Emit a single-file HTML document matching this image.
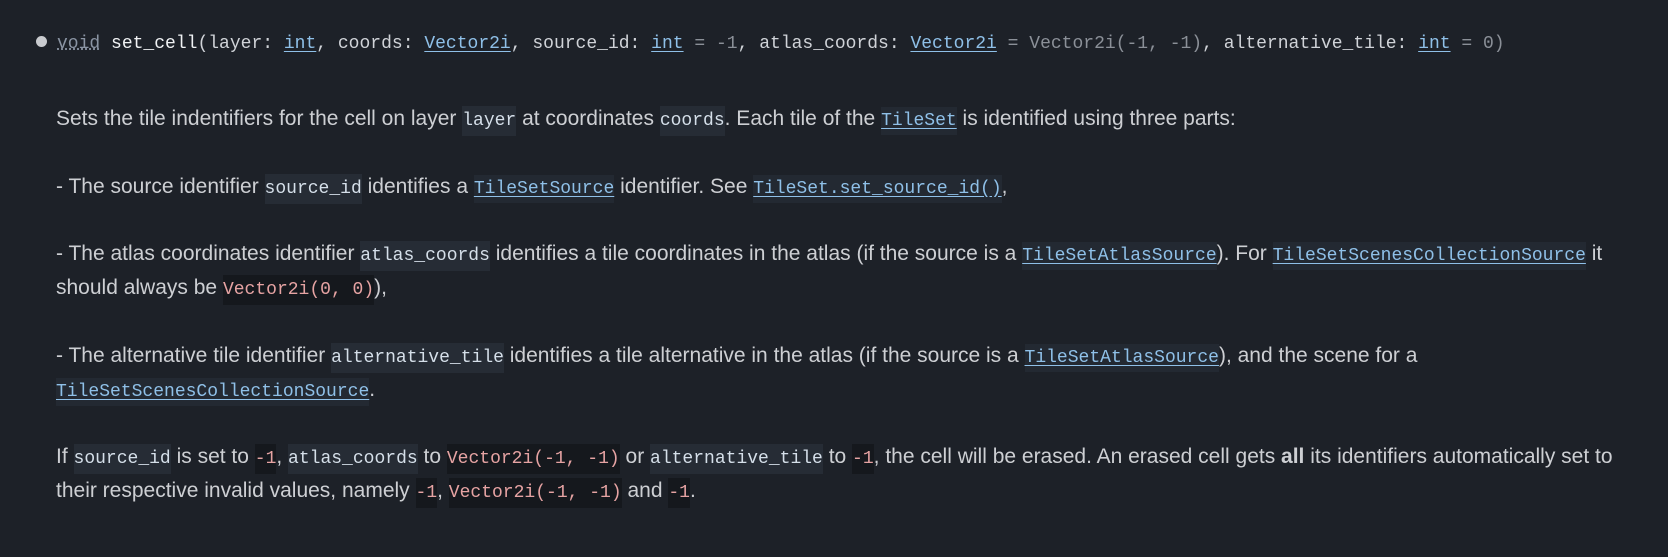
<!DOCTYPE html>
<html><head><meta charset="utf-8"><style>
html,body{margin:0;padding:0;background:#1d2128;width:1668px;height:557px;overflow:hidden}
body{font-family:"Liberation Sans",sans-serif;color:#cdcfd3;font-size:21px}
.sig{position:absolute;left:36px;top:34px;font-family:"Liberation Mono",monospace;font-size:18px;color:#d0d3d8;white-space:nowrap}
.dot{display:inline-block;width:11px;height:11px;border-radius:50%;background:#c9cbcf;margin-right:10px;vertical-align:1px}
.kw{color:#8a94a3;text-decoration:underline dotted #8a94a3}
.fn{color:#f0f2f4}
.ty{color:#8fc0e8;text-decoration:underline;text-underline-offset:3px}
.dim{color:#8b9098}
.desc{position:absolute;left:56px;top:102px;width:1580px;line-height:34px}
p{margin:0 0 33.5px 0}
code,a{line-height:1}
code{font-family:"Liberation Mono",monospace;font-size:18px;background:#262c35;color:#d5dfe9;padding:5px 0}
code.r{background:#15181d;color:#e6a3a3}
a{color:#8fc0e8;font-family:"Liberation Mono",monospace;font-size:18px;text-decoration:underline;text-underline-offset:3px;background:#232932;padding:4px 0}
</style></head><body>
<div class="sig"><span class="dot"></span><span class="kw">void</span> <span class="fn">set_cell</span>(layer: <span class="ty">int</span>, coords: <span class="ty">Vector2i</span>, source_id: <span class="ty">int</span> <span class="dim">= -1</span>, atlas_coords: <span class="ty">Vector2i</span> <span class="dim">= Vector2i(-1, -1)</span>, alternative_tile: <span class="ty">int</span> <span class="dim">= 0)</span></div>
<div class="desc">
<p>Sets the tile indentifiers for the cell on layer <code>layer</code> at coordinates <code>coords</code>. Each tile of the <a>TileSet</a> is identified using three parts:</p>
<p>- The source identifier <code>source_id</code> identifies a <a>TileSetSource</a> identifier. See <a>TileSet.set_source_id()</a>,</p>
<p>- The atlas coordinates identifier <code>atlas_coords</code> identifies a tile coordinates in the atlas (if the source is a <a>TileSetAtlasSource</a>). For <a>TileSetScenesCollectionSource</a> it should always be <code class="r">Vector2i(0, 0)</code>),</p>
<p>- The alternative tile identifier <code>alternative_tile</code> identifies a tile alternative in the atlas (if the source is a <a>TileSetAtlasSource</a>), and the scene for a <a>TileSetScenesCollectionSource</a>.</p>
<p>If <code>source_id</code> is set to <code class="r">-1</code>, <code>atlas_coords</code> to <code class="r">Vector2i(-1, -1)</code> or <code>alternative_tile</code> to <code class="r">-1</code>, the cell will be erased. An erased cell gets <b>all</b> its identifiers automatically set to their respective invalid values, namely <code class="r">-1</code>, <code class="r">Vector2i(-1, -1)</code> and <code class="r">-1</code>.</p>
</div>
</body></html>
